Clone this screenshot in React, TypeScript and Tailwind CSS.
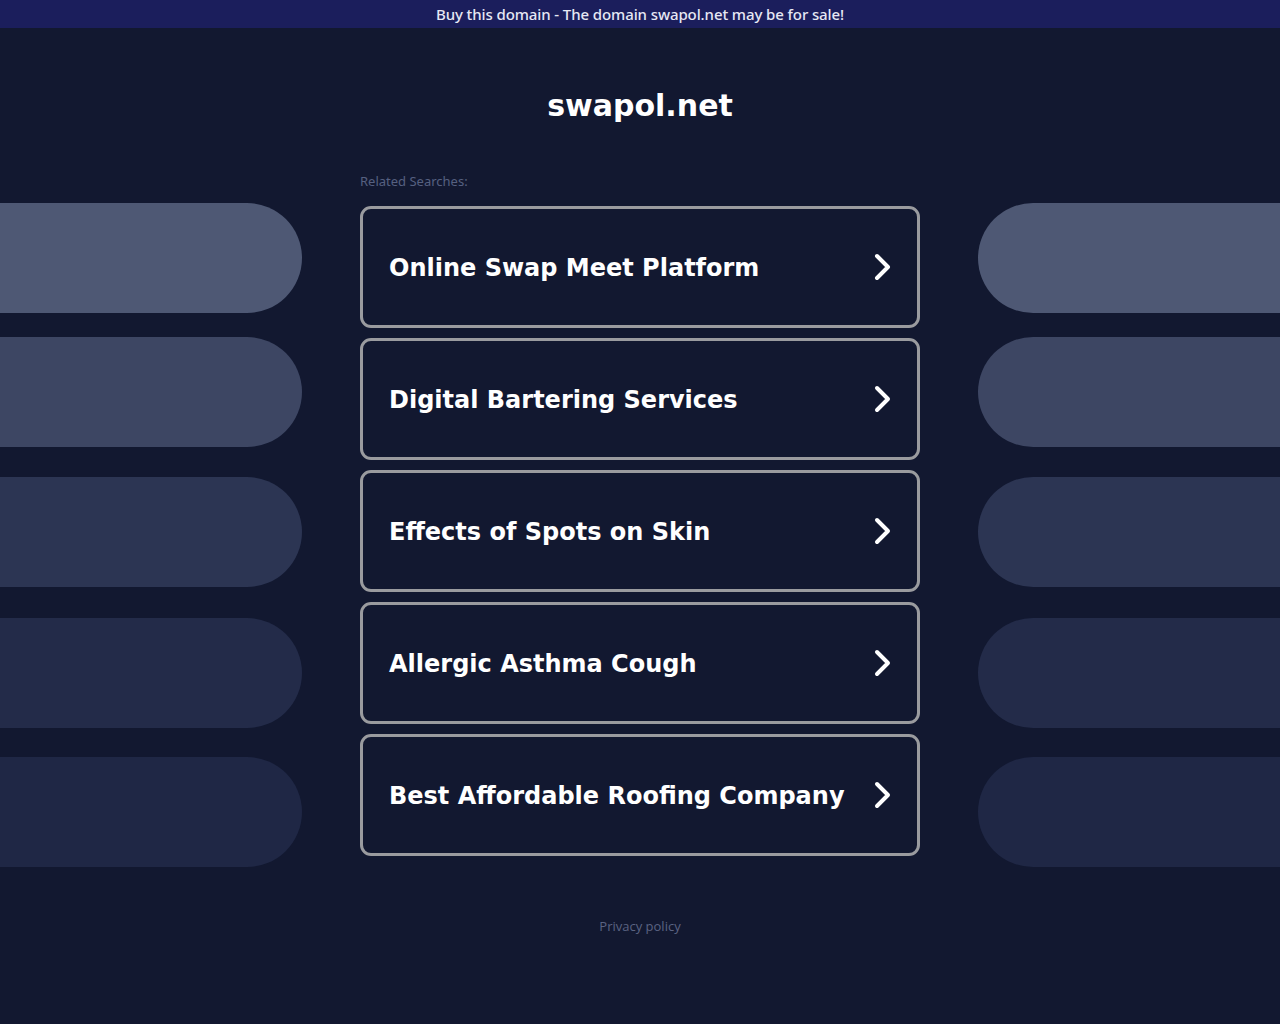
import React from "react";

const links = [
  "Online Swap Meet Platform",
  "Digital Bartering Services",
  "Effects of Spots on Skin",
  "Allergic Asthma Cough",
  "Best Affordable Roofing Company",
];

const pills = [
  { color: "bg-[#4e5874]", mt: "mt-[175px]" },
  { color: "bg-[#3d4663]", mt: "mt-[24px]" },
  { color: "bg-[#2c3553]", mt: "mt-[30px]" },
  { color: "bg-[#232b49]", mt: "mt-[31px]" },
  { color: "bg-[#1f2745]", mt: "mt-[29px]" },
];

function Chevron() {
  return (
    <svg width="24" height="32" viewBox="0 0 24 32" fill="none">
      <polyline
        points="6,5 17,16 6,27"
        stroke="white"
        strokeWidth="4"
        strokeLinecap="round"
        strokeLinejoin="round"
      />
    </svg>
  );
}

export default function App() {
  return (
    <div className="min-h-[1024px] w-full bg-[#121830] overflow-hidden">
      <div className="h-[28px] bg-[#1b1e5c] flex items-center justify-center">
        <span className="text-[15px] text-[#e6e8f4] font-medium tracking-[-0.1px]" style={{ fontFamily: '"Noto Sans", "Open Sans", sans-serif' }}>
          Buy this domain - The domain swapol.net may be for sale!
        </span>
      </div>
      <div className="flex w-full">
        <div className="w-[302px] shrink-0 flex flex-col">
          {pills.map((p, i) => (
            <div key={i} className={`${p.mt} h-[110px] w-full rounded-r-full ${p.color}`} />
          ))}
        </div>
        <div className="w-[560px] shrink-0 mx-[58px] flex flex-col">
          <h1
            className="mt-[60px] h-[36px] leading-[36px] text-center text-white text-[30px] font-bold"
            style={{ fontFamily: '"DejaVu Sans", sans-serif' }}
          >
            swapol.net
          </h1>
          <div
            className="mt-[49px] text-[13px] leading-[16px] text-[#566080]"
            style={{ fontFamily: '"Noto Sans", "Open Sans", sans-serif' }}
          >
            Related Searches:
          </div>
          <div className="mt-[17px] flex flex-col gap-[10px]">
            {links.map((l) => (
              <div
                key={l}
                className="h-[122px] rounded-[11px] border-[3px] border-[#9a9b9f] bg-[#121830] flex items-center justify-between pl-[26px] pr-[22px]"
              >
                <span
                  className="pt-[2px] text-white text-[24px] font-bold whitespace-nowrap"
                  style={{ fontFamily: '"DejaVu Sans", sans-serif' }}
                >
                  {l}
                </span>
                <Chevron />
              </div>
            ))}
          </div>
          <div
            className="mt-[62px] text-center text-[13px] leading-[16px] text-[#5b6382]"
            style={{ fontFamily: '"Open Sans", "Noto Sans", sans-serif' }}
          >
            Privacy policy
          </div>
        </div>
        <div className="w-[302px] shrink-0 flex flex-col">
          {pills.map((p, i) => (
            <div key={i} className={`${p.mt} h-[110px] w-full rounded-l-full ${p.color}`} />
          ))}
        </div>
      </div>
    </div>
  );
}
